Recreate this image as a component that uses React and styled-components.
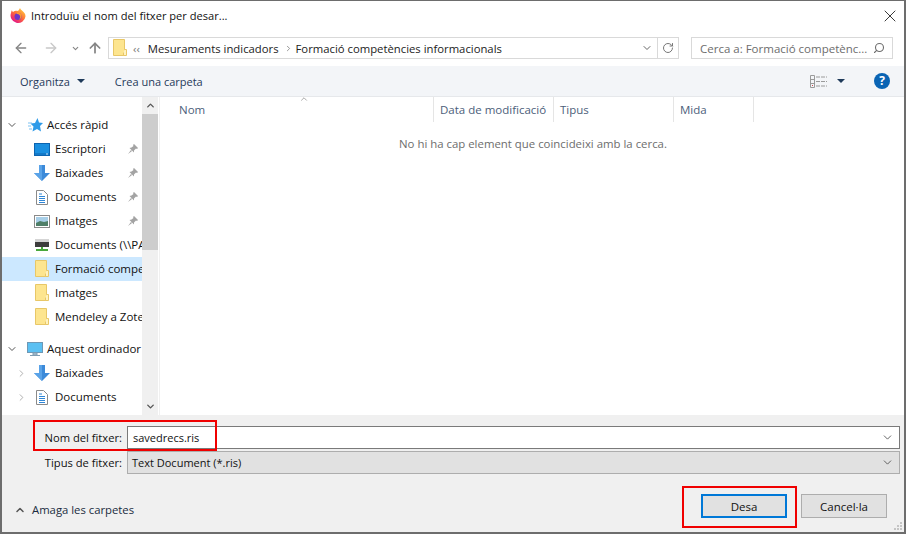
import React from 'react'
import styled, { createGlobalStyle } from 'styled-components'
import { ArrowLeft, ArrowRight, ArrowUp, ChevronDown, ChevronRight, ChevronUp, RotateCw, Search, X } from 'lucide-react'

const GlobalStyle = createGlobalStyle`
    html, body { margin: 0; padding: 0; background: #fff; }
    body { font-family: "Open Sans", "Noto Sans", sans-serif; font-size: 12px; color: #1a1a1a; }
    * { box-sizing: border-box; }
`
const Dialog = styled.div`
    position: relative;
    width: 906px;
    height: 534px;
    display: flex;
    flex-direction: column;
    background: #fff;
    border: 1px solid #6d6d6d;
    border-width: 1px 2px 2px 2px;
    overflow: hidden;
`
const TitleBar = styled.div`
    height: 31px;
    display: flex;
    align-items: center;
    padding: 0 4px 2px 8px;
    gap: 5px;
    flex: none;
`
const Title = styled.div`
    flex: 1;
    font-size: 11.1px;
    color: #111;
`
const AddressRow = styled.div`
    height: 34px;
    display: flex;
    align-items: flex-start;
    padding: 5px 0 0 10px;
    flex: none;
`
const NavButton = styled.div`
    width: 18px;
    height: 22px;
    align-items: center;
    margin-right: ${p => p.$mr || 0}px;
    display: flex;
    justify-content: center;
    color: ${p => p.$color || '#858585'};
`
const AddressBox = styled.div`
    width: 550px;
    height: 22px;
    margin-left: 4px;
    border: 1px solid #d9d9d9;
    display: flex;
    align-items: center;
    padding-left: 4px;
    color: #222;
`
const Crumb = styled.span`
    font-size: 11.3px;
    margin-left: ${p => p.$ml || 0}px;
    margin-right: ${p => p.$mr || 0}px;
    color: ${p => p.$color || '#222'};
`
const AddressChevron = styled.div`
    margin-left: auto;
    width: 20px;
    height: 20px;
    display: flex;
    align-items: center;
    justify-content: center;
    color: #666;
`
const RefreshButton = styled.div`
    width: 21px;
    height: 22px;
    border: 1px solid #d9d9d9;
    border-left: none;
    display: flex;
    align-items: center;
    justify-content: center;
    color: #777;
`
const SearchBox = styled.div`
    width: 202px;
    height: 22px;
    margin-left: 12px;
    border: 1px solid #d9d9d9;
    display: flex;
    align-items: center;
    justify-content: space-between;
    padding: 0 7px 0 8px;
    font-size: 11.5px;
    color: #6d6d6d;
`
const Toolbar = styled.div`
    height: 31px;
    flex: none;
    display: flex;
    align-items: center;
    background: #f3f5f8;
    border-bottom: 1px solid #e6e8eb;
    padding: 0 14px 0 18px;
    color: #1f3a5a;
    font-size: 11px;
`
const ToolText = styled.span`
    margin-right: ${p => p.$mr || 0}px;
`
const Spacer = styled.span`
    flex: 1;
`
const Caret = styled.span`
    width: 0;
    height: 0;
    border-left: 4px solid transparent;
    border-right: 4px solid transparent;
    border-top: 4px solid #1f3a5a;
    margin-left: ${p => p.$ml || 0}px;
    margin-right: ${p => p.$mr || 0}px;
`
const HelpIcon = styled.div`
    width: 16px;
    height: 16px;
    border-radius: 50%;
    background: #0a64b4;
    color: #fff;
    font-weight: 700;
    font-size: 12px;
    line-height: 16px;
    text-align: center;
`
const Main = styled.div`
    flex: 1;
    display: flex;
    min-height: 0;
`
const Sidebar = styled.div`
    width: 140px;
    flex: none;
    padding-top: 16px;
    overflow: hidden;
`
const Group = styled.div`
    margin-bottom: 8px;
`
const Row = styled.div`
    height: 24px;
    display: flex;
    align-items: center;
    white-space: nowrap;
    overflow: hidden;
    background: ${p => (p.$selected ? '#cce8ff' : 'transparent')};
`
const Toggle = styled.div`
    width: ${p => p.$w || 22}px;
    flex: none;
    padding-left: ${p => p.$inset || 4}px;
    color: ${p => p.$color || '#555'};
    display: flex;
`
const IconSlot = styled.div`
    width: 22px;
    flex: none;
    margin-left: ${p => p.$ml || 0}px;
    margin-right: ${p => p.$mr || 0}px;
    display: flex;
    justify-content: center;
`
const RowLabel = styled.span`
    font-size: 11.5px;
    color: #111;
    flex: 1;
    margin-bottom: 2px;
`
const Pin = styled.div`
    width: 14px;
    flex: none;
    display: flex;
`
const Scrollbar = styled.div`
    width: 16px;
    flex: none;
    background: #f0f0f0;
    display: flex;
    flex-direction: column;
    color: #555;
`
const ScrollArrow = styled.div`
    height: 17px;
    display: flex;
    align-items: center;
    justify-content: center;
`
const ScrollThumb = styled.div`
    height: 136px;
    background: #cdcdcd;
`
const ScrollSpace = styled.div`
    flex: 1;
`
const Content = styled.div`
    flex: 1;
    border-left: 1px solid #f0f0f0;
    margin-left: 1px;
    display: flex;
    flex-direction: column;
    align-items: stretch;
`
const Header = styled.div`
    position: relative;
    height: 25px;
    display: flex;
    flex: none;
`
const Column = styled.div`
    width: ${p => p.$w}px;
    padding-left: ${p => p.$pl || 6}px;
    border-right: 1px solid #e5e5e5;
    display: flex;
    align-items: center;
    font-size: 11.5px;
    color: #4c607a;
`
const SortArrow = styled.div`
    position: absolute;
    left: 139px;
    top: -3px;
    color: #777;
    display: flex;
`
const Empty = styled.div`
    margin-top: 14px;
    margin-left: 2px;
    text-align: center;
    font-size: 11.4px;
    color: #6d6d6d;
`
const Footer = styled.div`
    height: 117px;
    flex: none;
    background: #f0f0f0;
    position: relative;
`
const FieldRow = styled.div`
    height: 22px;
    display: flex;
    align-items: center;
    margin-bottom: 3px;
`
const Fields = styled.div`
    padding: 11px 4px 0 0;
`
const FieldLabel = styled.div`
    width: 125px;
    padding-right: 5px;
    text-align: right;
    font-size: 11.2px;
    color: #111;
`
const FieldBox = styled.div`
    flex: 1;
    height: 23px;
    display: flex;
    align-items: center;
    justify-content: space-between;
    padding: 0 5px 0 ${p => (p.$filled ? 4 : 5)}px;
    font-size: 11px;
    color: #111;
    background: ${p => (p.$filled ? '#e1e1e1' : '#fff')};
    border: 1px solid ${p => (p.$filled ? '#adadad' : '#7a7a7a')};
`
const FooterBar = styled.div`
    display: flex;
    align-items: flex-start;
    padding: 18px 17px 0 12px;
`
const HideFolders = styled.div`
    display: flex;
    align-items: center;
    gap: 6px;
    margin-top: 8px;
    font-size: 11.3px;
    color: #1a2c40;
    flex: 1;
`
const Button = styled.div`
    width: 86px;
    height: 24px;
    margin-left: 14px;
    display: flex;
    align-items: center;
    justify-content: center;
    font-size: 11.5px;
    color: #111;
    background: #e1e1e1;
    border: ${p => (p.$primary ? '2px solid #0078d7' : '1px solid #adadad')};
`
const Highlight = styled.div`
    position: absolute;
    left: ${p => p.$x}px;
    top: ${p => p.$y}px;
    width: ${p => p.$w}px;
    height: ${p => p.$h}px;
    border: 2px solid #f00000;
`
const Grip = styled.svg`
    position: absolute;
    right: 1px;
    bottom: 1px;
`

const Firefox = () => (
    <svg width="16" height="16" viewBox="0 0 16 16">
        <defs>
            <linearGradient id="fxBody" x1="0.8" y1="0.1" x2="0.2" y2="0.9">
                <stop offset="0" stopColor="#ffc23c" />
                <stop offset="0.5" stopColor="#ff6a3a" />
                <stop offset="1" stopColor="#e31587" />
            </linearGradient>
        </defs>
        <path d="M10 0c.5 1.500 1.500 2 2.500 3 2 1.500 3 3 3 5.500A7.500 7.500 0 1 1 1 5c0-1 .5-2 1-3 0 1 .5 1.500 1 2 1.500-1.500 4-1.500 5-1 1-1 1.500-2 2-3z" fill="url(#fxBody)" />
        <circle cx="8" cy="8.500" r="3.500" fill="#6a35c9" />
        <path d="M6 5.500c2-1.500 5-.5 5.500 2 .3 2-1 4-3 4.300 1.500-1 2-2.500 1.500-4C9.500 6.500 8 6 6 5.500z" fill="#ff9d2e" />
    </svg>
)
const Folder = () => (
    <svg width="14" height="18" viewBox="0 0 14 18">
        <path d="M.5.5h11v16H.5z" fill="#fde58f" stroke="#e8c767" />
        <path d="M11.500 10.500h2v6h-3v-3" fill="#fff2c0" stroke="#e8c767" />
    </svg>
)
const StarIcon = () => (
    <svg width="15" height="14" viewBox="0 0 15 14">
        <path d="M9.500 0l1.500 4.500 4 .5-3 3 1 5.500-4-2.500L4.500 13.500l1-5L2.500 5.500 7 5z" fill="#2f9be8" />
        <path d="M0 5h4M0 8h3M1 11h3" stroke="#7cc2f2" strokeWidth="1.200" />
    </svg>
)
const DesktopIcon = () => (
    <svg width="16" height="13" viewBox="0 0 16 13">
        <rect x="0.500" y="0.500" width="15" height="12" fill="#1a8fe0" stroke="#0c64b0" />
        <path d="M1 11h14" stroke="#0c64b0" />
        <path d="M12 11h2" stroke="#cfe9ff" />
    </svg>
)
const DownloadIcon = () => (
    <svg width="16" height="16" viewBox="0 0 16 16">
        <path d="M5 0h6v8h5l-8 8-8-8h5z" fill="#3c8ad9" />
        <path d="M5 0h3v16L0 8h5z" fill="#5aa3e8" />
    </svg>
)
const DocIcon = () => (
    <svg width="12" height="15" viewBox="0 0 12 15">
        <path d="M.5.500h7l4 4v10H.5z" fill="#fff" stroke="#8a8a8a" />
        <path d="M3 4h3M3 6.500h6M3 8.500h6M3 10.500h6M3 12.500h6" stroke="#2f86d6" />
    </svg>
)
const PictureIcon = () => (
    <svg width="16" height="13" viewBox="0 0 16 13">
        <rect x="0.500" y="0.500" width="15" height="12" fill="#fff" stroke="#8a8a8a" />
        <rect x="2" y="2" width="12" height="9" fill="#a8cfe8" />
        <path d="M2 8l4-2 4 1 4-1v5H2z" fill="#4f7f68" />
    </svg>
)
const DriveIcon = () => (
    <svg width="14" height="14" viewBox="0 0 14 14">
        <rect x="0" y="1" width="14" height="3" fill="#d5d5d5" />
        <rect x="0" y="4" width="14" height="5" fill="#3d3d3d" />
        <path d="M6 9h2v2h5v2H1v-2h5z" fill="#49a83c" />
    </svg>
)
const MonitorIcon = () => (
    <svg width="16" height="15" viewBox="0 0 16 15">
        <rect x="0.500" y="0.500" width="15" height="10" fill="#5bc0f2" stroke="#6e98b5" />
        <path d="M6 11h4v2H6zM3 13.500h10" stroke="#7f9db3" fill="#b8cad6" />
    </svg>
)
const PinIcon = () => (
    <svg width="10" height="10" viewBox="0 0 10 10">
        <path d="M6 0l4 4-1 1-1-.500L6 6.500 6 8.500 1.500 4l2-.500L5.500 2 5 1zM3 6l-3 4 4-3z" fill="#a3a3a3" />
    </svg>
)
const ViewsIcon = () => (
    <svg width="17" height="13" viewBox="0 0 17 13">
        <path d="M.5.500h4v12h-4z" fill="none" stroke="#9a9a9a" />
        <path d="M.5 4.500h4M.5 8.500h4" stroke="#9a9a9a" />
        <path d="M2 10h1v1H2z" fill="#d04a4a" />
        <path d="M6 2h11M6 6.500h11M6 11h11" stroke="#9a9a9a" strokeDasharray="4 1" />
    </svg>
)
const GripIcon = () => (
    <Grip width="10" height="10" viewBox="0 0 10 10">
        <path d="M7 1h2v2H7zM4 4h2v2H4zM7 4h2v2H7zM1 7h2v2H1zM4 7h2v2H4zM7 7h2v2H7z" fill="#c4c4c4" />
    </Grip>
)

const quickAccess = [
    { icon: <DesktopIcon />, label: 'Escriptori', pinned: true },
    { icon: <DownloadIcon />, label: 'Baixades', pinned: true },
    { icon: <DocIcon />, label: 'Documents', pinned: true },
    { icon: <PictureIcon />, label: 'Imatges', pinned: true },
    { icon: <DriveIcon />, label: 'Documents (\\\\PA' },
    { icon: <Folder />, label: 'Formació compe', selected: true },
    { icon: <Folder />, label: 'Imatges' },
    { icon: <Folder />, label: 'Mendeley a Zotero' },
]

const App = () => {
    return (
        <Dialog>
            <GlobalStyle />
            <TitleBar>
                <Firefox />
                <Title>Introduïu el nom del fitxer per desar...</Title>
                <X size={20} strokeWidth={1} color="#111" />
            </TitleBar>
            <AddressRow>
                <NavButton $mr={12}><ArrowLeft size={16} /></NavButton>
                <NavButton $mr={6} $color="#c8c8c8"><ArrowRight size={16} /></NavButton>
                <NavButton $mr={2}><ChevronDown size={9} strokeWidth={3} /></NavButton>
                <NavButton><ArrowUp size={16} strokeWidth={2.6} /></NavButton>
                <AddressBox>
                    <Folder />
                    <Crumb $ml={6} $mr={8} $color="#777">‹‹</Crumb>
                    <Crumb $mr={5}>Mesuraments indicadors</Crumb>
                    <ChevronRight size={9} color="#777" strokeWidth={2} />
                    <Crumb $ml={3}>Formació competències informacionals</Crumb>
                    <AddressChevron><ChevronDown size={12} strokeWidth={2} /></AddressChevron>
                </AddressBox>
                <RefreshButton><RotateCw size={12} strokeWidth={2} /></RefreshButton>
                <SearchBox>
                    <span>Cerca a: Formació competènc...</span>
                    <Search size={12} strokeWidth={2.2} style={{ transform: 'scaleX(-1)' }} />
                </SearchBox>
            </AddressRow>
            <Toolbar>
                <ToolText $mr={7}>Organitza</ToolText>
                <Caret $mr={30} />
                <ToolText>Crea una carpeta</ToolText>
                <Spacer />
                <ViewsIcon />
                <Caret $ml={10} $mr={29} />
                <HelpIcon>?</HelpIcon>
            </Toolbar>
            <Main>
                <Sidebar>
                    <Group>
                        <Row>
                            <Toggle><ChevronDown size={12} strokeWidth={2} /></Toggle>
                            <IconSlot $mr={1}><StarIcon /></IconSlot>
                            <RowLabel>Accés ràpid</RowLabel>
                        </Row>
                        {quickAccess.map(item => (
                            <Row key={item.label} $selected={item.selected}>
                                <IconSlot $ml={29} $mr={2}>{item.icon}</IconSlot>
                                <RowLabel>{item.label}</RowLabel>
                                {item.pinned && <Pin><PinIcon /></Pin>}
                            </Row>
                        ))}
                    </Group>
                    <Row>
                        <Toggle><ChevronDown size={12} strokeWidth={2} /></Toggle>
                        <IconSlot $mr={1}><MonitorIcon /></IconSlot>
                        <RowLabel>Aquest ordinador</RowLabel>
                    </Row>
                    <Row>
                        <Toggle $w={29} $inset={14} $color="#aaa"><ChevronRight size={11} strokeWidth={2} /></Toggle>
                        <IconSlot $mr={2}><DownloadIcon /></IconSlot>
                        <RowLabel>Baixades</RowLabel>
                    </Row>
                    <Row>
                        <Toggle $w={29} $inset={14} $color="#aaa"><ChevronRight size={11} strokeWidth={2} /></Toggle>
                        <IconSlot $mr={2}><DocIcon /></IconSlot>
                        <RowLabel>Documents</RowLabel>
                    </Row>
                </Sidebar>
                <Scrollbar>
                    <ScrollArrow><ChevronUp size={11} strokeWidth={3} /></ScrollArrow>
                    <ScrollThumb />
                    <ScrollSpace />
                    <ScrollArrow><ChevronDown size={11} strokeWidth={3} /></ScrollArrow>
                </Scrollbar>
                <Content>
                    <Header>
                        <SortArrow><ChevronUp size={10} strokeWidth={1.5} /></SortArrow>
                        <Column $w={274} $pl={19}>Nom</Column>
                        <Column $w={120}>Data de modificació</Column>
                        <Column $w={120}>Tipus</Column>
                        <Column $w={80}>Mida</Column>
                    </Header>
                    <Empty>No hi ha cap element que coincideixi amb la cerca.</Empty>
                </Content>
            </Main>
            <Footer>
                <Fields>
                    <FieldRow>
                        <FieldLabel>Nom del fitxer:</FieldLabel>
                        <FieldBox>savedrecs.ris<ChevronDown size={13} color="#444" strokeWidth={1.5} /></FieldBox>
                    </FieldRow>
                    <FieldRow>
                        <FieldLabel>Tipus de fitxer:</FieldLabel>
                        <FieldBox $filled>Text Document (*.ris)<ChevronDown size={13} color="#444" strokeWidth={1.5} /></FieldBox>
                    </FieldRow>
                </Fields>
                <FooterBar>
                    <HideFolders>
                        <ChevronUp size={12} strokeWidth={3} color="#555" />
                        Amaga les carpetes
                    </HideFolders>
                    <Button $primary>Desa</Button>
                    <Button>Cancel·la</Button>
                </FooterBar>
                <GripIcon />
            </Footer>
            <Highlight $x={31} $y={419} $w={184} $h={31} />
            <Highlight $x={680} $y={485} $w={115} $h={42} />
        </Dialog>
    )
}

export default App
